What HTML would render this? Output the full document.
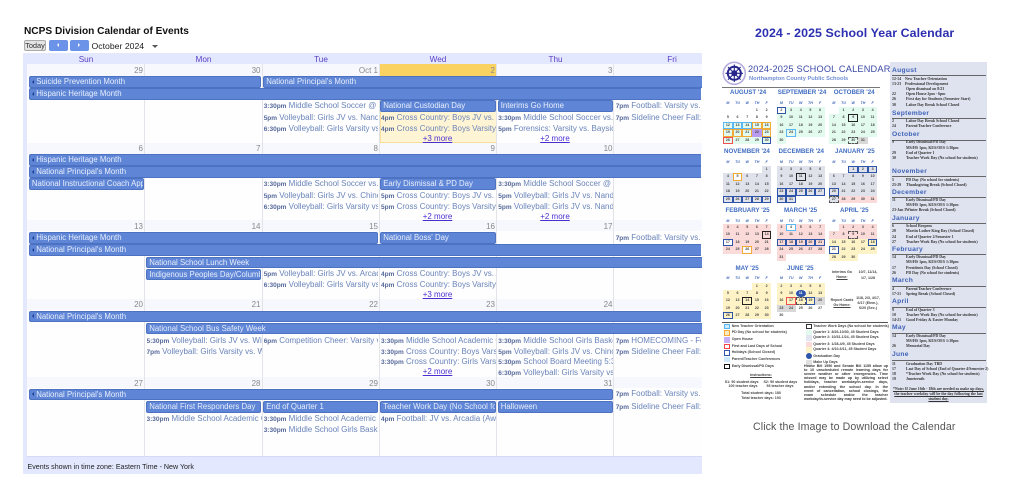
<!DOCTYPE html>
<html><head><meta charset="utf-8"><style>
html,body{margin:0;padding:0;background:#fff}
body{width:1024px;height:480px;overflow:hidden;position:relative;font-family:"Liberation Sans",sans-serif;filter:blur(.35px)}
div,span.x{position:absolute}
.s{left:27px;width:674.5px;height:11px;background:#f7f8fd}
.w{left:27px;width:674.5px;background:#fefefe}
.v{width:1px;top:64px;height:392px;background:#e2e4ea}
.h{top:53.5px;height:11px;line-height:11px;font-size:8.2px;color:#5a3fc4;width:118px;text-align:center}
.n{height:11px;line-height:11px;font-size:8px;color:#888;text-align:right;width:112px}
.a{box-sizing:border-box;height:11.7px;line-height:10.5px;background:#5f86d6;border:.6px solid #4d72c2;border-radius:2px;color:#e8eefb;font-size:7.8px;white-space:nowrap;overflow:hidden;padding-left:2.2px}
.l{padding-left:6.5px}
.l:before{content:"";position:absolute;left:2px;top:2.5px;border:2.5px solid transparent;border-right-color:#1d3f8c;border-left:0}
.r0{border-top-right-radius:0;border-bottom-right-radius:0;border-right:0}
.e{height:11px;line-height:11px;overflow:hidden;white-space:nowrap;font-size:8px;color:#6a84ba}
.e b{font-size:6.5px;color:#55689a}
.c1{left:146.5px;width:115px}.c2{left:263.7px;width:114.5px}.c3{left:381px;width:114.5px}.c4{left:498.3px;width:114.5px}.c5{left:615.7px;width:85.5px}
.m{height:11px;line-height:11px;font-size:8px;color:#4a2fd0;text-decoration:underline;text-align:center;width:117px}
.g{display:grid;grid-template-columns:repeat(5,9.7px);grid-auto-rows:7.4px;font-size:3.6px;line-height:7px;text-align:center;color:#444;font-weight:bold}
.g i{font-style:normal;box-sizing:border-box}
.mint i:not(:empty){background:#e3fbef}.gray i:not(:empty){background:#dfe2ea}.pink i:not(:empty){background:#fbdada}.yel i:not(:empty){background:#fdf3c6}
.g i.b{border:1.2px solid #2f55a8;line-height:5px}.g i.o{border:1.2px solid #f1aa35;line-height:5px}.g i.c{border:1.2px solid #5cb8f5;line-height:5px}
.g i.k{border:1.2px solid #222;line-height:5px}.g i.q{border:1.2px solid #f05050;line-height:5px}.g i.d{border:1px dashed #555;line-height:5px}
.g i.p{background:#b99cf0}.g i.y{background:#d8d8d8}.g i.f{background:#fff}
.ch{font-size:3.6px;line-height:7px;font-weight:bold;color:#3d64b8;display:grid;grid-template-columns:repeat(5,9.7px);text-align:center}
.mt{font-size:6.2px;font-weight:bold;color:#3f6cc0;white-space:nowrap;line-height:9px;height:9px}
.pn{font-size:6.7px;font-weight:bold;color:#3f62b8;left:892px;line-height:9px;letter-spacing:.3px}
.ru{left:892px;width:94px;height:1px;background:#666}
.t{font-family:"Liberation Serif",serif;font-size:3.9px;line-height:5px;height:5px;color:#333;white-space:nowrap;font-weight:bold}
.lg{font-size:3.6px;font-weight:bold;line-height:5px;height:5px;color:#444;white-space:nowrap}
.bx{width:6px;height:5.5px;box-sizing:border-box}
.ct{font-size:3.6px;font-weight:bold;line-height:5px;height:5px;color:#444;white-space:nowrap;text-align:center}
.pj{left:804px;width:84px;font-size:3.6px;font-weight:bold;line-height:5px;height:5px;color:#333;white-space:normal;text-align:justify;text-align-last:justify}
</style></head><body>

<div style="left:24px;top:25px;font-size:10.15px;font-weight:bold;color:#111;line-height:13px;white-space:nowrap">NCPS Division Calendar of Events</div>
<div style="left:24px;top:40px;width:22px;height:11px;box-sizing:border-box;background:#e4e4e4;border:1px solid #aaa;border-radius:2px;font-size:7.4px;line-height:9px;text-align:center;color:#333">Today</div>
<div style="left:49px;top:40px;width:19px;height:11px;background:#6b93e8;border-radius:2px"></div>
<div style="left:56.5px;top:43px;border:2.7px solid transparent;border-right-color:#fff;border-left:0"></div>
<div style="left:70px;top:40px;width:18.5px;height:11px;background:#6b93e8;border-radius:2px"></div>
<div style="left:77.5px;top:43px;border:2.7px solid transparent;border-left-color:#fff;border-right:0"></div>
<div style="left:91.5px;top:40px;font-size:8.7px;line-height:12px;color:#222;white-space:nowrap">October 2024</div>
<div style="left:151.5px;top:45px;border:3px solid transparent;border-top-color:#555;border-bottom:0"></div>

<div style="left:22.5px;top:53px;width:679px;height:420.5px;background:#e3e8fe"></div>
<div class="h" style="left:27px">Sun</div><div class="h" style="left:144.5px">Mon</div><div class="h" style="left:262px">Tue</div><div class="h" style="left:379px">Wed</div><div class="h" style="left:496.5px">Thu</div><div class="h" style="left:613px">Fri</div>

<div class="w" style="top:64px;height:392px"></div>
<div class="s" style="top:64px;height:12px"></div><div class="s" style="top:142.7px"></div><div class="s" style="top:220px"></div><div class="s" style="top:299px"></div><div class="s" style="top:377.3px"></div>
<div style="left:379.5px;top:64px;width:117px;height:12px;background:#f9d262"></div>
<div style="left:379.5px;top:100px;width:117px;height:42.7px;box-sizing:border-box;background:#fff5d4;border:1px solid #f9e09a;border-top:0"></div>
<div class="v" style="left:144px"></div><div class="v" style="left:262px"></div><div class="v" style="left:379px"></div><div class="v" style="left:496px"></div><div class="v" style="left:613px"></div>
<div style="left:27px;top:455.5px;width:674.5px;height:1px;background:#d5dbf7"></div>

<div class="n" style="left:31px;top:64.5px">29</div><div class="n" style="left:148.5px;top:64.5px">30</div><div class="n" style="left:266px;top:64.5px">Oct 1</div><div class="n" style="left:383px;top:64.5px">2</div><div class="n" style="left:500.5px;top:64.5px">3</div>
<div class="n" style="left:31px;top:142.7px">6</div><div class="n" style="left:148.5px;top:142.7px">7</div><div class="n" style="left:266px;top:142.7px">8</div><div class="n" style="left:383px;top:142.7px">9</div><div class="n" style="left:500.5px;top:142.7px">10</div>
<div class="n" style="left:31px;top:220.5px">13</div><div class="n" style="left:148.5px;top:220.5px">14</div><div class="n" style="left:266px;top:220.5px">15</div><div class="n" style="left:383px;top:220.5px">16</div><div class="n" style="left:500.5px;top:220.5px">17</div>
<div class="n" style="left:31px;top:299px">20</div><div class="n" style="left:148.5px;top:299px">21</div><div class="n" style="left:266px;top:299px">22</div><div class="n" style="left:383px;top:299px">23</div><div class="n" style="left:500.5px;top:299px">24</div>
<div class="n" style="left:31px;top:377.5px">27</div><div class="n" style="left:148.5px;top:377.5px">28</div><div class="n" style="left:266px;top:377.5px">29</div><div class="n" style="left:383px;top:377.5px">30</div><div class="n" style="left:500.5px;top:377.5px">31</div>

<!-- week 1 -->
<div class="a l" style="left:28.7px;top:76px;width:232.5px">Suicide Prevention Month</div>
<div class="a r0" style="left:263px;top:76px;width:438.5px">National Principal's Month</div>
<div class="a l r0" style="left:28.7px;top:88.2px;width:672.8px">Hispanic Heritage Month</div>
<div class="a" style="left:380px;top:100.3px;width:116px">National Custodian Day</div>
<div class="a" style="left:497.5px;top:100.3px;width:115px">Interims Go Home</div>
<div class="e c2" style="top:100px"><b>3:30pm</b> Middle School Soccer @ Arcadia</div>
<div class="e c2" style="top:112px"><b>5pm</b> Volleyball: Girls JV vs. Nandua</div>
<div class="e c2" style="top:123px"><b>6:30pm</b> Volleyball: Girls Varsity vs. Nandua</div>
<div class="e c3" style="top:112px"><b>4pm</b> Cross Country: Boys JV vs. Nandua</div>
<div class="e c3" style="top:123px"><b>4pm</b> Cross Country: Boys Varsity vs. Nandua</div>
<div class="m" style="left:379px;top:133px">+3 more</div>
<div class="e c4" style="top:112px"><b>3:30pm</b> Middle School Soccer vs. Chincoteague</div>
<div class="e c4" style="top:123px"><b>5pm</b> Forensics: Varsity vs. Baysicle</div>
<div class="m" style="left:496.5px;top:133px">+2 more</div>
<div class="e c5" style="top:100px"><b>7pm</b> Football: Varsity vs. Nandua</div>
<div class="e c5" style="top:112px"><b>7pm</b> Sideline Cheer Fall: Varsity</div>

<!-- week 2 -->
<div class="a l r0" style="left:28.7px;top:154px;width:672.8px">Hispanic Heritage Month</div>
<div class="a l r0" style="left:28.7px;top:166.2px;width:672.8px">National Principal's Month</div>
<div class="a" style="left:28.7px;top:178.3px;width:115.5px">National Instructional Coach Appreciation Day</div>
<div class="a" style="left:380px;top:178.3px;width:116px">Early Dismissal &amp; PD Day</div>
<div class="e c2" style="top:178px"><b>3:30pm</b> Middle School Soccer vs. Chincoteague</div>
<div class="e c2" style="top:190px"><b>5pm</b> Volleyball: Girls JV vs. Chincoteague</div>
<div class="e c2" style="top:201px"><b>6:30pm</b> Volleyball: Girls Varsity vs. Chincoteague</div>
<div class="e c3" style="top:190px"><b>5pm</b> Cross Country: Boys JV vs. Broadwater</div>
<div class="e c3" style="top:201px"><b>5pm</b> Cross Country: Boys Varsity vs. Broadwater</div>
<div class="m" style="left:379px;top:211px">+2 more</div>
<div class="e c4" style="top:178px"><b>3:30pm</b> Middle School Soccer @ Nandua</div>
<div class="e c4" style="top:190px"><b>5pm</b> Volleyball: Girls JV vs. Nandua</div>
<div class="e c4" style="top:201px"><b>5pm</b> Volleyball: Girls JV vs. Nandua</div>
<div class="m" style="left:496.5px;top:211px">+2 more</div>

<!-- week 3 -->
<div class="a l" style="left:28.7px;top:232.2px;width:349.5px">Hispanic Heritage Month</div>
<div class="a" style="left:380px;top:232.2px;width:116px">National Boss' Day</div>
<div class="e c5" style="top:231.5px"><b>7pm</b> Football: Varsity vs. Arcadia</div>
<div class="a l r0" style="left:28.7px;top:244.2px;width:672.8px">National Principal's Month</div>
<div class="a r0" style="left:146px;top:256.5px;width:555.5px">National School Lunch Week</div>
<div class="a" style="left:146px;top:268.5px;width:115px">Indigenous Peoples Day/Columbus Day</div>
<div class="e c2" style="top:268px"><b>5pm</b> Volleyball: Girls JV vs. Arcadia</div>
<div class="e c2" style="top:279px"><b>6:30pm</b> Volleyball: Girls Varsity vs. Arcadia</div>
<div class="e c3" style="top:268px"><b>4pm</b> Cross Country: Boys JV vs. Arcadia</div>
<div class="e c3" style="top:279px"><b>4pm</b> Cross Country: Boys Varsity vs. Arcadia</div>
<div class="m" style="left:379px;top:289px">+3 more</div>

<!-- week 4 -->
<div class="a l r0" style="left:28.7px;top:310.5px;width:672.8px">National Principal's Month</div>
<div class="a r0" style="left:146px;top:322.7px;width:555.5px">National School Bus Safety Week</div>
<div class="e c1" style="top:334.5px"><b>5:30pm</b> Volleyball: Girls JV vs. Wicomico</div>
<div class="e c1" style="top:345.5px"><b>7pm</b> Volleyball: Girls Varsity vs. Wicomico</div>
<div class="e c2" style="top:334.5px"><b>6pm</b> Competition Cheer: Varsity vs. Nandua</div>
<div class="e c3" style="top:334.5px"><b>3:30pm</b> Middle School Academic Competition</div>
<div class="e c3" style="top:345.5px"><b>3:30pm</b> Cross Country: Boys Varsity vs. Nandua</div>
<div class="e c3" style="top:356px"><b>3:30pm</b> Cross Country: Girls Varsity vs. Nandua</div>
<div class="m" style="left:379px;top:366px">+2 more</div>
<div class="e c4" style="top:334.5px"><b>3:30pm</b> Middle School Girls Basketball</div>
<div class="e c4" style="top:345.5px"><b>5pm</b> Volleyball: Girls JV vs. Chincoteague</div>
<div class="e c4" style="top:356px"><b>5:30pm</b> School Board Meeting 5:30pm</div>
<div class="e c4" style="top:367px"><b>6:30pm</b> Volleyball: Girls Varsity vs. Chincoteague</div>
<div class="e c5" style="top:334.5px"><b>7pm</b> HOMECOMING - Football</div>
<div class="e c5" style="top:345.5px"><b>7pm</b> Sideline Cheer Fall: Varsity</div>

<!-- week 5 -->
<div class="a l" style="left:28.7px;top:388.5px;width:584px">National Principal's Month</div>
<div class="a" style="left:146px;top:401px;width:115px">National First Responders Day</div>
<div class="a" style="left:263px;top:401px;width:115px">End of Quarter 1</div>
<div class="a" style="left:380px;top:401px;width:116px">Teacher Work Day (No School for Students)</div>
<div class="a" style="left:497.5px;top:401px;width:115px">Halloween</div>
<div class="e c1" style="top:412.5px"><b>3:30pm</b> Middle School Academic Competition</div>
<div class="e c2" style="top:412.5px"><b>3:30pm</b> Middle School Academic Competition</div>
<div class="e c2" style="top:423.5px"><b>3:30pm</b> Middle School Girls Basketball</div>
<div class="e c3" style="top:412.5px"><b>4pm</b> Football: JV vs. Arcadia (Away)</div>
<div class="e c5" style="top:388px"><b>7pm</b> Football: Varsity vs. Arcadia</div>
<div class="e c5" style="top:400.5px"><b>7pm</b> Sideline Cheer Fall: Varsity</div>

<div style="left:27.5px;top:462px;font-size:7.1px;line-height:11px;color:#222;white-space:nowrap">Events shown in time zone: Eastern Time - New York</div>

<!-- right column -->
<div style="left:755px;top:26px;font-size:12.4px;font-weight:bold;line-height:15px;color:#2c2fb0;white-space:nowrap;letter-spacing:.08px">2024 - 2025 School Year Calendar</div>

<svg style="position:absolute;left:722px;top:61px" width="26" height="26" viewBox="0 0 26 26"><circle cx="12.3" cy="12.3" r="11" fill="#fff" stroke="#b5aedd" stroke-width="1.6"/><circle cx="12.3" cy="12.3" r="6.5" fill="none" stroke="#26258c" stroke-width="2"/><circle cx="12.3" cy="12.3" r="3" fill="#26258c"/><path d="M12.3 3.5V21M3.5 12.3H21M6 6l12.6 12.6M18.6 6L6 18.6" stroke="#26258c" stroke-width="1.1"/></svg>
<div style="left:748px;top:62.5px;font-size:9.2px;line-height:13px;color:#3b4aa6;white-space:nowrap;letter-spacing:.2px">2024-2025 SCHOOL CALENDAR</div>
<div style="left:749px;top:74.5px;font-size:5.7px;font-weight:bold;line-height:8px;color:#7390d4;white-space:nowrap">Northampton County Public Schools</div>
<div style="left:722px;top:87px;width:158px;height:1px;background:#777"></div>

<div class="mt" style="left:730px;top:88.2px">AUGUST '24</div><div class="mt" style="left:777.7px;top:88.2px">SEPTEMBER '24</div><div class="mt" style="left:833.7px;top:88.2px">OCTOBER '24</div>
<div class="mt" style="left:724px;top:147.2px">NOVEMBER '24</div><div class="mt" style="left:778.5px;top:147.2px">DECEMBER '24</div><div class="mt" style="left:835px;top:147.2px">JANUARY '25</div>
<div class="mt" style="left:725.5px;top:205.5px">FEBRUARY '25</div><div class="mt" style="left:784px;top:205.5px">MARCH '25</div><div class="mt" style="left:840px;top:205.5px">APRIL '25</div>
<div class="mt" style="left:735.5px;top:263.5px">MAY '25</div><div class="mt" style="left:787px;top:263.5px">JUNE '25</div>

<div class="ch" style="left:723px;top:100px"><i>M</i><i>TU</i><i>W</i><i>TH</i><i>F</i></div>
<div class="ch" style="left:776.5px;top:100px"><i>M</i><i>TU</i><i>W</i><i>TH</i><i>F</i></div>
<div class="ch" style="left:829px;top:100px"><i>M</i><i>TU</i><i>W</i><i>TH</i><i>F</i></div>
<div class="ch" style="left:723px;top:159px"><i>M</i><i>TU</i><i>W</i><i>TH</i><i>F</i></div>
<div class="ch" style="left:776.5px;top:159px"><i>M</i><i>TU</i><i>W</i><i>TH</i><i>F</i></div>
<div class="ch" style="left:829px;top:159px"><i>M</i><i>TU</i><i>W</i><i>TH</i><i>F</i></div>
<div class="ch" style="left:723px;top:217.5px"><i>M</i><i>TU</i><i>W</i><i>TH</i><i>F</i></div>
<div class="ch" style="left:776.5px;top:217.5px"><i>M</i><i>TU</i><i>W</i><i>TH</i><i>F</i></div>
<div class="ch" style="left:829px;top:217.5px"><i>M</i><i>TU</i><i>W</i><i>TH</i><i>F</i></div>
<div class="ch" style="left:723px;top:275px"><i>M</i><i>TU</i><i>W</i><i>TH</i><i>F</i></div>
<div class="ch" style="left:776.5px;top:275px"><i>M</i><i>TU</i><i>W</i><i>TH</i><i>F</i></div>

<div class="g" style="left:723px;top:107px"><i></i><i></i><i></i><i>1</i><i>2</i><i>5</i><i>6</i><i>7</i><i>8</i><i>9</i><i class="c" style="background:#e3fbef">12</i><i class="c" style="background:#e3fbef">13</i><i class="c" style="background:#e3fbef">14</i><i class="o" style="background:#e3fbef">15</i><i class="o" style="background:#e3fbef">16</i><i class="o" style="background:#e3fbef">19</i><i class="o" style="background:#e3fbef">20</i><i class="o" style="background:#e3fbef">21</i><i class="p">22</i><i class="o" style="background:#e3fbef">23</i><i class="q" style="background:#e3fbef">26</i><i style="background:#e3fbef">27</i><i style="background:#e3fbef">28</i><i style="background:#e3fbef">29</i><i class="b" style="background:#e3fbef">30</i></div>
<div class="g mint" style="left:776.5px;top:107px"><i class="b f">2</i><i>3</i><i>4</i><i>5</i><i>6</i><i>9</i><i>10</i><i>11</i><i>12</i><i>13</i><i>16</i><i>17</i><i>18</i><i>19</i><i>20</i><i>23</i><i class="c">24</i><i>25</i><i>26</i><i>27</i><i>30</i></div>
<div class="g mint" style="left:829px;top:107px"><i></i><i>1</i><i>2</i><i>3</i><i>4</i><i>7</i><i>8</i><i class="k">9</i><i>10</i><i>11</i><i>14</i><i>15</i><i>16</i><i>17</i><i>18</i><i>21</i><i>22</i><i>23</i><i>24</i><i>25</i><i>28</i><i>29</i><i class="d">30</i><i class="y">31</i></div>

<div class="g gray" style="left:723px;top:166px"><i></i><i></i><i></i><i></i><i>1</i><i>4</i><i class="o f">5</i><i>6</i><i>7</i><i>8</i><i>11</i><i>12</i><i>13</i><i>14</i><i>15</i><i>18</i><i>19</i><i>20</i><i>21</i><i>22</i><i class="b">25</i><i class="b">26</i><i class="b">27</i><i class="b">28</i><i class="b">29</i></div>
<div class="g gray" style="left:776.5px;top:166px"><i>2</i><i>3</i><i>4</i><i>5</i><i>6</i><i>9</i><i>10</i><i class="k">11</i><i>12</i><i>13</i><i>16</i><i>17</i><i>18</i><i>19</i><i>20</i><i class="b">23</i><i class="b">24</i><i class="b">25</i><i class="b">26</i><i class="b">27</i><i class="b">30</i><i class="b">31</i></div>
<div class="g gray" style="left:829px;top:166px"><i></i><i></i><i class="b">1</i><i class="b">2</i><i class="b">3</i><i>6</i><i>7</i><i>8</i><i>9</i><i>10</i><i>13</i><i>14</i><i>15</i><i>16</i><i>17</i><i class="b">20</i><i>21</i><i>22</i><i>23</i><i>24</i><i class="d">27</i><i style="background:#fbdada">28</i><i style="background:#fbdada">29</i><i style="background:#fbdada">30</i><i style="background:#fbdada">31</i></div>

<div class="g pink" style="left:723px;top:224px"><i>3</i><i>4</i><i>5</i><i>6</i><i>7</i><i>10</i><i>11</i><i>12</i><i>13</i><i class="k">14</i><i class="b f">17</i><i>18</i><i>19</i><i>20</i><i>21</i><i>24</i><i>25</i><i class="o f">26</i><i>27</i><i>28</i></div>
<div class="g pink" style="left:776.5px;top:224px"><i>3</i><i class="c f">4</i><i>5</i><i>6</i><i>7</i><i>10</i><i>11</i><i>12</i><i>13</i><i>14</i><i class="b">17</i><i class="b">18</i><i class="b">19</i><i class="b">20</i><i class="b">21</i><i>24</i><i>25</i><i>26</i><i>27</i><i>28</i><i>31</i></div>
<div class="g pink" style="left:829px;top:224px"><i></i><i>1</i><i>2</i><i>3</i><i>4</i><i>7</i><i>8</i><i class="d">9</i><i>10</i><i>11</i><i style="background:#fdf3c6">14</i><i style="background:#fdf3c6">15</i><i style="background:#fdf3c6">16</i><i style="background:#fdf3c6">17</i><i class="b" style="background:#fdf3c6">18</i><i class="b f">21</i><i style="background:#fdf3c6">22</i><i style="background:#fdf3c6">23</i><i style="background:#fdf3c6">24</i><i style="background:#fdf3c6">25</i><i style="background:#fdf3c6">28</i><i style="background:#fdf3c6">29</i><i style="background:#fdf3c6">30</i></div>

<div class="g yel" style="left:723px;top:282.5px"><i></i><i></i><i></i><i>1</i><i>2</i><i>5</i><i>6</i><i>7</i><i>8</i><i>9</i><i>12</i><i>13</i><i class="k">14</i><i>15</i><i>16</i><i>19</i><i>20</i><i>21</i><i>22</i><i>23</i><i class="b">26</i><i>27</i><i>28</i><i>29</i><i>30</i></div>
<div class="g yel" style="left:776.5px;top:282.5px"><i>2</i><i>3</i><i>4</i><i>5</i><i>6</i><i>9</i><i>10</i><i class="b" style="border-radius:50%;background:#2f55a8;color:#fff">11</i><i>12</i><i>13</i><i>16</i><i class="q">17</i><i class="d">18</i><i class="b">19</i><i class="y">20</i><i class="y">23</i><i class="y">24</i><i style="background:#fff">25</i><i style="background:#fff">26</i><i style="background:#fff">27</i><i style="background:#fff">30</i></div>

<div class="ct" style="left:829px;top:269.8px;width:26px">Interims Go</div><div class="ct" style="left:829px;top:274.8px;width:26px;text-decoration:underline">Home:</div>
<div class="ct" style="left:855px;top:269.8px;width:26px">10/7, 11/14,</div><div class="ct" style="left:855px;top:275.5px;width:26px">1/7, 1/28</div>
<div class="ct" style="left:829px;top:297.5px;width:26px">Report Cards</div><div class="ct" style="left:829px;top:302.5px;width:26px;text-decoration:underline">Go Home:</div>
<div class="ct" style="left:855px;top:295.5px;width:26px">11/8, 2/3, 4/17,</div><div class="ct" style="left:855px;top:301px;width:26px">6/17 (Elem.),</div><div class="ct" style="left:855px;top:305.5px;width:26px">6/20 (Sec.)</div>

<!-- legend -->
<div style="left:722px;top:322.3px;width:166px;height:1px;background:#555"></div>
<div class="bx" style="left:724px;top:323.5px;border:1.3px solid #5cb8f5;background:#cfeaff"></div><div class="lg" style="left:731.7px;top:323.5px">New Teacher Orientation</div>
<div class="bx" style="left:724px;top:330px;border:1.3px solid #f1aa35;background:#fde9c0"></div><div class="lg" style="left:731.7px;top:330px">PD Day (No school for students)</div>
<div class="bx" style="left:724px;top:337px;background:#c5aef5"></div><div class="lg" style="left:731.7px;top:337px">Open House</div>
<div class="bx" style="left:724px;top:343.5px;border:1.3px solid #f04545"></div><div class="lg" style="left:731.7px;top:343.5px">First and Last Days of School</div>
<div class="bx" style="left:724px;top:350px;border:1.3px solid #2f55a8"></div><div class="lg" style="left:731.7px;top:350px">Holidays (School Closed)</div>
<div class="bx" style="left:724px;top:356.5px;background:#cfeaff"></div><div class="lg" style="left:731.7px;top:356.5px">Parent/Teacher Conferences</div>
<div class="bx" style="left:724px;top:363.5px;border:1.4px solid #111"></div><div class="lg" style="left:731.7px;top:363.5px">Early Dismissal/PD Days</div>

<div class="bx" style="left:806px;top:323.5px;border:.7px solid #333"></div><div class="lg" style="left:813.3px;top:323.5px">Teacher Work Days (No school for students)</div>
<div class="bx" style="left:806px;top:329.5px;background:#e3fbef"></div><div class="lg" style="left:813.3px;top:329.5px">Quarter 1: 8/26-10/30, 45 Student Days</div>
<div class="bx" style="left:806px;top:335px;background:#e3e6f0"></div><div class="lg" style="left:813.3px;top:335px">Quarter 2: 10/31-1/24, 45 Student Days</div>
<div class="bx" style="left:806px;top:341.5px;background:#fbdada"></div><div class="lg" style="left:813.3px;top:341.5px">Quarter 3: 1/28-4/9, 45 Student Days</div>
<div class="bx" style="left:806px;top:347px;background:#fdf3c6"></div><div class="lg" style="left:813.3px;top:347px">Quarter 4: 4/10-6/11, 45 Student Days</div>
<div style="left:806px;top:353px;width:6px;height:6px;border-radius:50%;background:#2f55a8"></div><div class="lg" style="left:813.3px;top:353.5px">Graduation Day</div>
<div class="bx" style="left:806px;top:360px;background:#e0e0e0"></div><div class="lg" style="left:813.3px;top:360px">Make Up Days</div>

<div class="pj" style="top:364px">House Bill 1950 and Senate Bill 1155 allow up</div>
<div class="pj" style="top:368.1px">to 10 unscheduled remote learning days for</div>
<div class="pj" style="top:372.2px">severe weather or other emergencies. Time</div>
<div class="pj" style="top:376.3px">missed may be made up by utilizing select</div>
<div class="pj" style="top:380.4px">holidays, teacher workday/in-service days,</div>
<div class="pj" style="top:384.5px">and/or extending the school day. In the</div>
<div class="pj" style="top:388.6px">event of cancellation, school closings, the</div>
<div class="pj" style="top:392.7px">exam schedule and/or the teacher</div>
<div class="lg" style="left:804px;top:396.8px;color:#333">workday/in-service day may need to be adjusted.</div>

<div class="ct" style="left:722px;top:372.5px;width:78px;text-decoration:underline">Instructions:</div>
<div class="ct" style="left:722px;top:379.5px;width:78px">S1: 90 student days &nbsp; &nbsp; S2: 90 student days</div>
<div class="ct" style="left:722px;top:384.2px;width:78px">100 teacher days &nbsp; &nbsp; &nbsp; &nbsp; 93 teacher days</div>
<div class="ct" style="left:722px;top:390.5px;width:78px">Total student days: 180</div>
<div class="ct" style="left:722px;top:395.5px;width:78px">Total teacher days: 193</div>

<!-- side panel -->
<div style="left:890px;top:61.7px;width:97.3px;height:341.6px;background:#dfe3ef"></div>
<div class="pn" style="top:65.5px">August</div><div class="ru" style="top:75px"></div>
<div class="t" style="left:892px;top:76.8px">12-14 &nbsp; &nbsp;New Teacher Orientation</div>
<div class="t" style="left:892px;top:81.8px">13-23 &nbsp; &nbsp;Professional Development</div>
<div class="t" style="left:906px;top:86.8px">Open dismissal on 8/23</div>
<div class="t" style="left:892px;top:91.8px">22</div><div class="t" style="left:906px;top:91.8px">Open House 2pm - 6pm</div>
<div class="t" style="left:892px;top:97.2px">26</div><div class="t" style="left:906px;top:97.2px">First day for Students (Semester Start)</div>
<div class="t" style="left:892px;top:103.2px">30</div><div class="t" style="left:906px;top:103.2px">Labor Day Break School Closed</div>

<div class="pn" style="top:108.8px">September</div><div class="ru" style="top:117.7px"></div>
<div class="t" style="left:892px;top:119.2px">2</div><div class="t" style="left:906px;top:119.2px">Labor Day Break School Closed</div>
<div class="t" style="left:892px;top:124.2px">24</div><div class="t" style="left:906px;top:124.2px">Parent/Teacher Conference</div>

<div class="pn" style="top:129.8px">October</div><div class="ru" style="top:140px"></div>
<div class="t" style="left:892px;top:140.2px">9</div><div class="t" style="left:906px;top:140.2px">Early Dismissal/PD Day</div>
<div class="t" style="left:906px;top:145.8px">MS/HS 1pm, KES/OES 1:30pm</div>
<div class="t" style="left:892px;top:151.2px">29</div><div class="t" style="left:906px;top:151.2px">End of Quarter 1</div>
<div class="t" style="left:892px;top:156.2px">30</div><div class="t" style="left:906px;top:156.2px">Teacher Work Day (No school for students)</div>

<div class="pn" style="top:166.5px">November</div><div class="ru" style="top:176px"></div>
<div class="t" style="left:892px;top:177.5px">5</div><div class="t" style="left:906px;top:177.5px">PD Day (No school for students)</div>
<div class="t" style="left:892px;top:182.5px">25-29</div><div class="t" style="left:906px;top:182.5px">Thanksgiving Break (School Closed)</div>

<div class="pn" style="top:187.8px">December</div><div class="ru" style="top:197.3px"></div>
<div class="t" style="left:892px;top:197.5px">11</div><div class="t" style="left:906px;top:197.5px">Early Dismissal/PD Day</div>
<div class="t" style="left:906px;top:203.2px">MS/HS 1pm, KES/OES 1:30pm</div>
<div class="t" style="left:892px;top:208.2px">23-Jan 3</div><div class="t" style="left:906px;top:208.2px">Winter Break (School Closed)</div>

<div class="pn" style="top:213.8px">January</div><div class="ru" style="top:223.3px"></div>
<div class="t" style="left:892px;top:223.8px">6</div><div class="t" style="left:906px;top:223.8px">School Reopens</div>
<div class="t" style="left:892px;top:229.2px">20</div><div class="t" style="left:906px;top:229.2px">Martin Luther King Day (School Closed)</div>
<div class="t" style="left:892px;top:234.5px">24</div><div class="t" style="left:906px;top:234.5px">End of Quarter 2/Semester 1</div>
<div class="t" style="left:892px;top:239.5px">27</div><div class="t" style="left:906px;top:239.5px">Teacher Work Day (No school for students)</div>

<div class="pn" style="top:244.8px">February</div><div class="ru" style="top:254.3px"></div>
<div class="t" style="left:892px;top:254.8px">14</div><div class="t" style="left:906px;top:254.8px">Early Dismissal/PD Day</div>
<div class="t" style="left:906px;top:259.8px">MS/HS 1pm, KES/OES 1:30pm</div>
<div class="t" style="left:892px;top:265.5px">17</div><div class="t" style="left:906px;top:265.5px">Presidents Day (School Closed)</div>
<div class="t" style="left:892px;top:270.8px">26</div><div class="t" style="left:906px;top:270.8px">PD Day (No school for students)</div>

<div class="pn" style="top:276.2px">March</div><div class="ru" style="top:285.7px"></div>
<div class="t" style="left:892px;top:286.8px">4</div><div class="t" style="left:906px;top:286.8px">Parent/Teacher Conference</div>
<div class="t" style="left:892px;top:291.5px">17-21</div><div class="t" style="left:906px;top:291.5px">Spring Break (School Closed)</div>

<div class="pn" style="top:297.2px">April</div><div class="ru" style="top:306.7px"></div>
<div class="t" style="left:892px;top:307.5px">9</div><div class="t" style="left:906px;top:307.5px">End of Quarter 3</div>
<div class="t" style="left:892px;top:312.8px">10</div><div class="t" style="left:906px;top:312.8px">Teacher Work Day (No school for students)</div>
<div class="t" style="left:892px;top:317.8px">14-21</div><div class="t" style="left:906px;top:317.8px">Good Friday &amp; Easter Monday</div>

<div class="pn" style="top:323.2px">May</div><div class="ru" style="top:332.7px"></div>
<div class="t" style="left:892px;top:333.5px">14</div><div class="t" style="left:906px;top:333.5px">Early Dismissal/PD Day</div>
<div class="t" style="left:906px;top:339.2px">MS/HS 1pm, KES/OES 1:30pm</div>
<div class="t" style="left:892px;top:344.2px">26</div><div class="t" style="left:906px;top:344.2px">Memorial Day</div>

<div class="pn" style="top:349.5px">June</div><div class="ru" style="top:360px"></div>
<div class="t" style="left:892px;top:361.5px">11</div><div class="t" style="left:906px;top:361.5px">Graduation Day TBD</div>
<div class="t" style="left:892px;top:366.8px">17</div><div class="t" style="left:906px;top:366.8px">Last Day of School (End of Quarter 4/Semester 2)</div>
<div class="t" style="left:892px;top:371.8px">18</div><div class="t" style="left:906px;top:371.8px">*Teacher Work Day (No school for students)</div>
<div class="t" style="left:892px;top:377.2px">19</div><div class="t" style="left:906px;top:377.2px">Juneteenth</div>
<div class="t" style="left:891px;top:386.8px;width:95px;text-align:center;text-decoration:underline">*Note: If June 16th - 18th are needed as make up days,</div>
<div class="t" style="left:891px;top:391.5px;width:95px;text-align:center;text-decoration:underline">the teacher workday will be the day following the last</div>
<div class="t" style="left:891px;top:396.5px;width:95px;text-align:center;text-decoration:underline">student day.</div>

<div style="left:753px;top:420px;font-size:10.6px;line-height:14px;color:#555;white-space:nowrap;letter-spacing:.1px">Click the Image to Download the Calendar</div>
</body></html>
